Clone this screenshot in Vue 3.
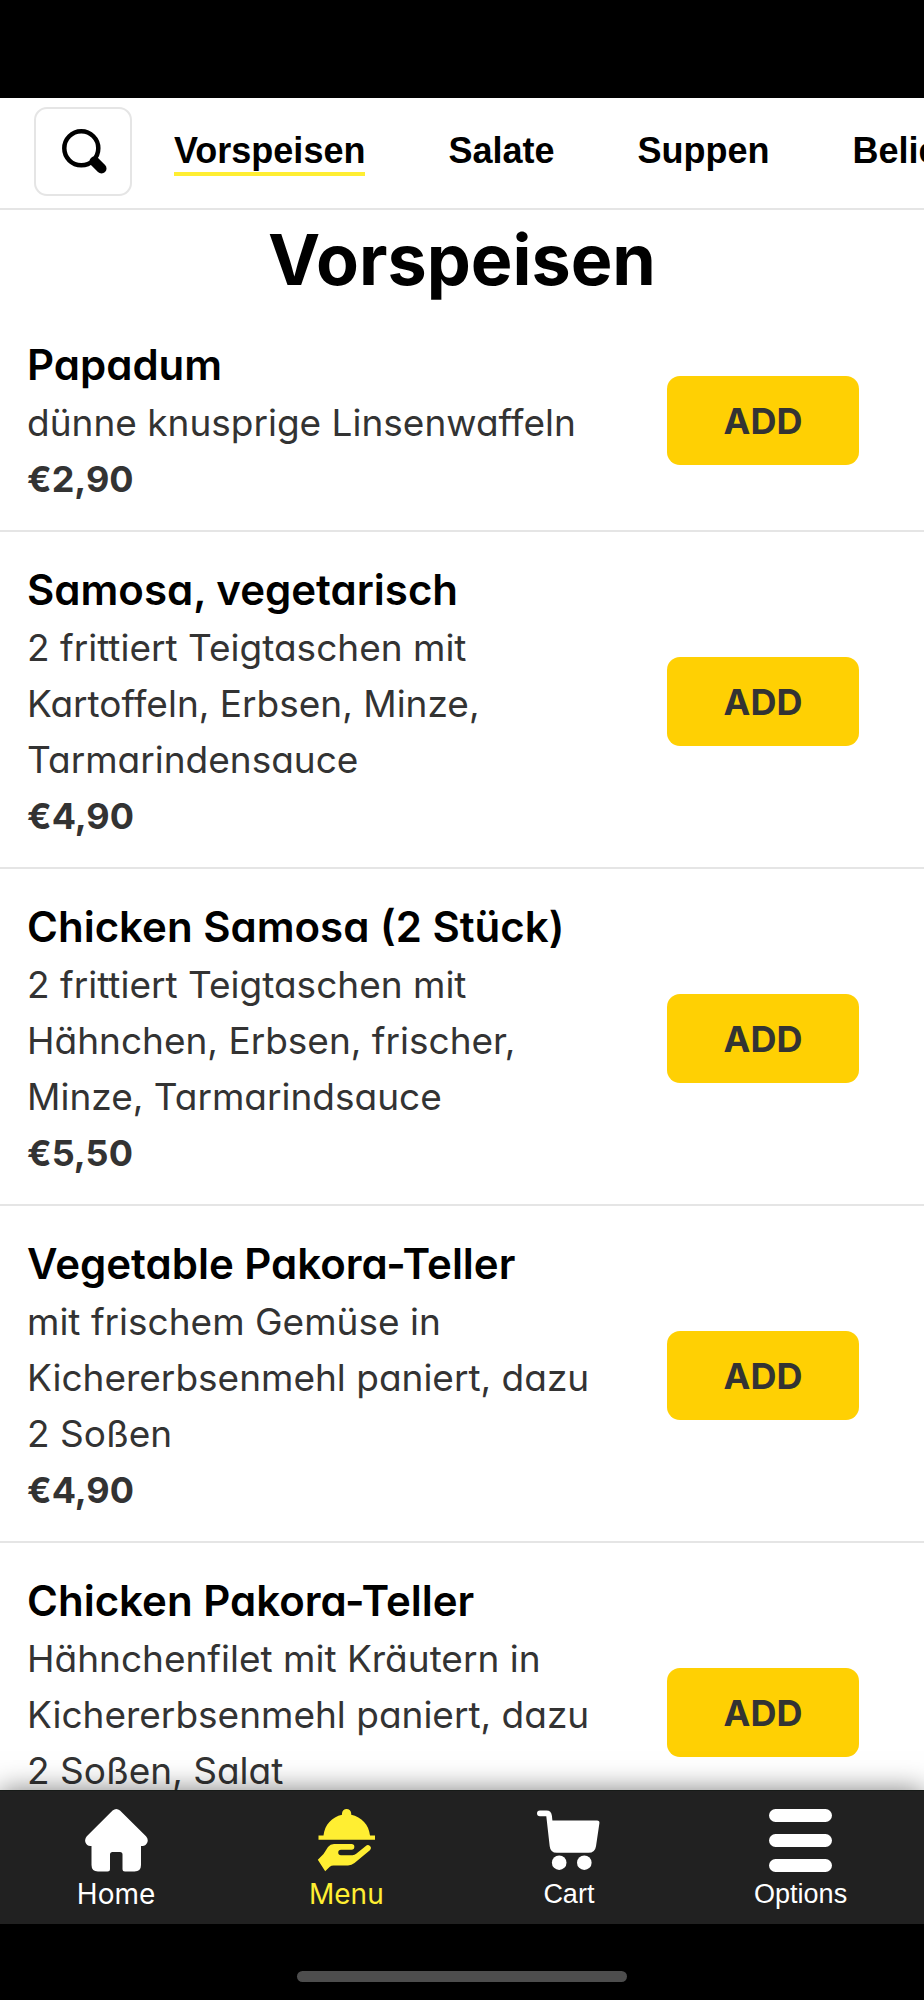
<script setup>
import { ref } from 'vue'

const categories = ['Vorspeisen', 'Salate', 'Suppen', 'Beliebte']
const active = ref('Vorspeisen')

const dishes = [
  { name: 'Papadum', text: 'dünne knusprige Linsenwaffeln', price: '€2,90' },
  { name: 'Samosa, vegetarisch', text: '2 frittiert Teigtaschen mit Kartoffeln, Erbsen, Minze, Tarmarindensauce', price: '€4,90' },
  { name: 'Chicken Samosa (2 Stück)', text: '2 frittiert Teigtaschen mit Hähnchen, Erbsen, frischer, Minze, Tarmarindsauce', price: '€5,50' },
  { name: 'Vegetable Pakora-Teller', text: 'mit frischem Gemüse in Kichererbsenmehl paniert, dazu 2 Soßen', price: '€4,90' },
  { name: 'Chicken Pakora-Teller', text: 'Hähnchenfilet mit Kräutern in Kichererbsenmehl paniert, dazu 2 Soßen, Salat', price: '' },
]
</script>

<template>
  <div class="app">
    <div class="status"></div>

    <header class="topbar">
      <button class="search" type="button" aria-label="Suche">
        <svg viewBox="0 0 46 46" aria-hidden="true">
          <circle cx="19.3" cy="19.3" r="17" fill="none" stroke="#000" stroke-width="4.5" />
          <path d="M32.5 32.5L39.5 39.5" stroke="#000" stroke-width="10" stroke-linecap="round" />
        </svg>
      </button>
      <nav class="tabs">
        <a
          v-for="c in categories"
          :key="c"
          href="#"
          class="tab"
          :class="{ active: c === active }"
          @click.prevent="active = c"
        >{{ c }}</a>
      </nav>
    </header>

    <main class="content">
      <h1>Vorspeisen</h1>
      <ul class="list">
        <li v-for="d in dishes" :key="d.name" class="dish">
          <div class="info">
            <h2>{{ d.name }}</h2>
            <p class="text">{{ d.text }}</p>
            <p class="price">{{ d.price }}</p>
          </div>
          <button class="add" type="button">ADD</button>
        </li>
      </ul>
    </main>

    <nav class="bottom">
      <a href="#" class="item">
        <svg viewBox="0 0 63 63" aria-hidden="true">
          <path d="M27.6 1.5Q31.3-1.5 35 1.5L61 27.2Q63.5 30 62.4 33.2Q61 36.8 57.4 37H56V56Q56 62.5 49.5 62.5H40Q37.5 62.5 37.5 60V45.5Q37.5 43 35 43H27.5Q25 43 25 45.5V60Q25 62.5 22.5 62.5H13Q6.5 62.5 6.5 56V37H5.3Q1.6 36.8.4 33.2Q-.6 30 1.8 27.2Z" />
        </svg>
        <span>Home</span>
      </a>
      <a href="#" class="item current">
        <svg viewBox="0 0 63 63" aria-hidden="true">
          <path d="M27 5.8V4.6A4.6 4.6 0 0 1 36.2 4.6V5.8C46.500 8 54 16 55 26.500H60V30.800H3.500V26.500H8.500C9.500 16 17 8 27 5.800Z" />
          <path d="M2.800 50.700L8.500 45L13 38Q15.300 35 19 35H36.500A2.850 2.850 0 0 1 36.500 40.700H26A2.700 2.700 0 0 0 26 46.200H37.500Q39.600 46.200 41.200 44.800L50.800 37A2.850 2.850 0 0 1 54.900 41.200L39.500 54Q36.600 56.400 33 56.400H18.500Q16.300 56.400 14.800 57.800L10.200 62.200Z" />
        </svg>
        <span>Menu</span>
      </a>
      <a href="#" class="item plain">
        <svg viewBox="0 0 63 63" aria-hidden="true">
          <path d="M2.900 1.400H9.500Q14.300 1.400 14.900 6.800L15.400 11.500H60Q62.800 11.500 62.400 14.300L59 37.200Q58 43.800 51.500 43.800H19.800Q13.400 43.800 12.700 37.200L9.300 7.200H2.900A2.900 2.900 0 0 1 2.900 1.400Z" />
          <circle cx="22.200" cy="53.700" r="7.300" />
          <circle cx="47.300" cy="53.700" r="7.300" />
        </svg>
        <span>Cart</span>
      </a>
      <a href="#" class="item plain">
        <svg viewBox="0 0 63 63" aria-hidden="true">
          <rect x="0" y="0" width="63" height="13" rx="6.500" />
          <rect x="0" y="25" width="63" height="13" rx="6.500" />
          <rect x="0" y="50" width="63" height="13" rx="6.500" />
        </svg>
        <span>Options</span>
      </a>
    </nav>

    <div class="gesture"><div class="pill"></div></div>
  </div>
</template>

<style>
body {
  background: #000;
}
</style>

<style scoped>
.app {
  display: flex;
  flex-direction: column;
  height: 100vh;
  background: #fff;
  color: #000;
  font-family: Inter, "Open Sans", sans-serif;
  font-feature-settings: "cv11";
  overflow: hidden;
}
.status {
  flex: none;
  height: 98px;
  background: #000;
}
.topbar {
  flex: none;
  display: flex;
  align-items: flex-start;
  gap: 42px;
  padding: 9px 0 12px 34px;
  border-bottom: 2px solid #e5e5e5;
}
.search {
  flex: none;
  display: flex;
  align-items: center;
  justify-content: center;
  width: 98px;
  height: 89px;
  padding: 0 0 0 4px;
  border: 2px solid #e5e5e5;
  border-radius: 13px;
  background: #fff;
}
.search svg {
  width: 46px;
  height: 46px;
}
.tabs {
  flex: 1;
  min-width: 0;
  display: flex;
  gap: 83px;
  padding-top: 23px;
  overflow: hidden;
}
.tab {
  flex: none;
  border-bottom: 4px solid transparent;
  color: #000;
  font: bold 36px/42px "Liberation Sans", Arial, sans-serif;
  text-decoration: none;
}
.tab.active {
  border-color: #ffee32;
}
.content {
  flex: 1;
  min-height: 0;
  overflow-y: auto;
  scrollbar-width: none;
}
h1 {
  margin: 0;
  padding-top: 2px;
  font-size: 70px;
  line-height: 95px;
  font-weight: 700;
  text-align: center;
}
.list {
  margin: 0;
  padding: 0;
  list-style: none;
}
.dish {
  display: flex;
  align-items: center;
  justify-content: space-between;
  padding: 27px 65px 23px 27px;
  border-bottom: 2px solid #e5e5e5;
}
.info {
  flex: 0 1 575px;
}
h2 {
  margin: 0;
  font-size: 42px;
  line-height: 61px;
  font-weight: 600;
}
.text,
.price {
  margin: 0;
  min-height: 56px;
  color: #333;
  line-height: 56px;
}
.text {
  font-size: 37px;
}
.price {
  font-size: 36px;
  font-weight: 700;
}
.add {
  flex: none;
  width: 192px;
  height: 89px;
  padding: 0;
  border: 0;
  border-radius: 13px;
  background: #ffd003;
  color: #333;
  font: 700 36px/40px Inter, sans-serif;
}
.bottom {
  flex: none;
  position: relative;
  display: flex;
  justify-content: space-around;
  padding: 18px 0 14px;
  border-top: 1px solid #161a17;
  background: #212121;
  box-shadow: 0 0 26px rgba(0, 0, 0, 0.5);
}
.item {
  display: flex;
  flex-direction: column;
  align-items: center;
  gap: 6px;
  color: #fff;
  font-size: 28px;
  line-height: 32px;
  text-decoration: none;
}
.item svg {
  width: 63px;
  height: 63px;
  fill: currentColor;
}
.current {
  color: #ffee32;
}
.plain {
  font-family: "Liberation Sans", Arial, sans-serif;
  font-size: 27px;
}
.gesture {
  flex: none;
  display: flex;
  justify-content: center;
  align-items: flex-end;
  height: 76px;
  padding-bottom: 18px;
  box-sizing: border-box;
  background: #000;
}
.pill {
  width: 330px;
  height: 11px;
  border-radius: 6px;
  background: #4d4d4d;
}
</style>
